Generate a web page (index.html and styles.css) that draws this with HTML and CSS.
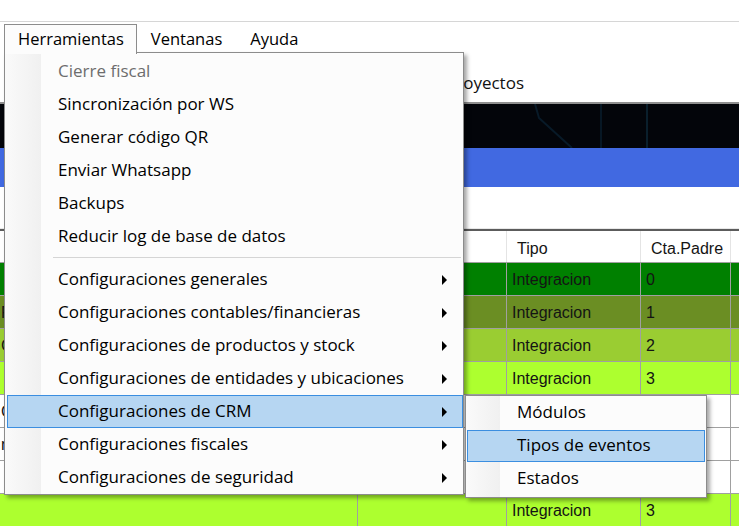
FILE: index.html
```html
<!DOCTYPE html>
<html lang="es">
<head>
    <meta charset="UTF-8">
    <title>Herramientas</title>
    <link rel="stylesheet" href="styles.css">
</head>
<body>
    <div class="titlebar"></div>

    <div class="menubar">
        <div class="menubar-item open">Herramientas</div>
        <div class="menubar-item">Ventanas</div>
        <div class="menubar-item">Ayuda</div>
    </div>

    <div class="toolbar">
        <span class="tool-link">Proyectos</span>
    </div>

    <div class="banner">
        <svg width="100%" height="44" viewBox="0 0 739 44" preserveAspectRatio="none">
            <polyline points="535,0 539,14 572,44" fill="none" stroke="#081a28" stroke-width="2"/>
            <line x1="601" y1="0" x2="601" y2="44" stroke="#071724" stroke-width="2"/>
            <line x1="647" y1="0" x2="647" y2="44" stroke="#0a1f2c" stroke-width="2"/>
        </svg>
    </div>
    <div class="band"></div>
    <div class="filter"></div>

    <div class="grid">
        <div class="grid-head">
            <div class="head-cell"></div>
            <div class="head-cell"></div>
            <div class="head-cell">Tipo</div>
            <div class="head-cell">Cta.Padre</div>
            <div class="head-cell"></div>
        </div>
        <div class="grid-row lvl0">
            <div class="cell"></div><div class="cell"></div><div class="cell">Integracion</div><div class="cell">0</div><div class="cell"></div>
        </div>
        <div class="grid-row lvl1">
            <div class="cell">Rdo</div><div class="cell"></div><div class="cell">Integracion</div><div class="cell">1</div><div class="cell"></div>
        </div>
        <div class="grid-row lvl2">
            <div class="cell">Caja</div><div class="cell"></div><div class="cell">Integracion</div><div class="cell">2</div><div class="cell"></div>
        </div>
        <div class="grid-row lvl3">
            <div class="cell"></div><div class="cell"></div><div class="cell">Integracion</div><div class="cell">3</div><div class="cell"></div>
        </div>
        <div class="grid-row">
            <div class="cell">Caja</div><div class="cell"></div><div class="cell"></div><div class="cell"></div><div class="cell"></div>
        </div>
        <div class="grid-row">
            <div class="cell">neto</div><div class="cell"></div><div class="cell"></div><div class="cell"></div><div class="cell"></div>
        </div>
        <div class="grid-row">
            <div class="cell"></div><div class="cell"></div><div class="cell"></div><div class="cell"></div><div class="cell"></div>
        </div>
        <div class="grid-row lvl3">
            <div class="cell"></div><div class="cell"></div><div class="cell">Integracion</div><div class="cell">3</div><div class="cell"></div>
        </div>
    </div>

    <div class="dropdown">
        <div class="menu-entry disabled">Cierre fiscal</div>
        <div class="menu-entry">Sincronización por WS</div>
        <div class="menu-entry">Generar código QR</div>
        <div class="menu-entry">Enviar Whatsapp</div>
        <div class="menu-entry">Backups</div>
        <div class="menu-entry">Reducir log de base de datos</div>
        <div class="menu-sep"></div>
        <div class="menu-entry">Configuraciones generales<span class="arrow"></span></div>
        <div class="menu-entry">Configuraciones contables/financieras<span class="arrow"></span></div>
        <div class="menu-entry">Configuraciones de productos y stock<span class="arrow"></span></div>
        <div class="menu-entry">Configuraciones de entidades y ubicaciones<span class="arrow"></span></div>
        <div class="menu-entry selected">Configuraciones de CRM<span class="arrow"></span></div>
        <div class="menu-entry">Configuraciones fiscales<span class="arrow"></span></div>
        <div class="menu-entry">Configuraciones de seguridad<span class="arrow"></span></div>
    </div>

    <div class="submenu">
        <div class="sub-entry">Módulos</div>
        <div class="sub-entry selected">Tipos de eventos</div>
        <div class="sub-entry">Estados</div>
    </div>
</body>
</html>
```

FILE: styles.css
```css
body {
    margin: 0;
    padding: 0;
    background: white;
    font-family: "Open Sans", "Noto Sans", sans-serif;
    font-size: 17px;
    color: #000;
    overflow: hidden;
}
.titlebar {
    height: 21px;
    border-bottom: 1px solid #d6d6d6;
}
.menubar {
    display: flex;
    align-items: flex-start;
    height: 30px;
    padding-left: 4px;
    font-size: 16.5px;
}
.menubar-item {
    margin-top: 2px;
    height: 29px;
    line-height: 27px;
    padding: 0 13px;
    border: 1px solid transparent;
    border-bottom: none;
    box-sizing: border-box;
}
.menubar-item.open {
    position: relative;
    z-index: 3;
    height: 30px;
    border-color: #8c8c8c;
    background: #fcfcfc;
    padding-right: 12px;
}
.toolbar {
    box-sizing: border-box;
    height: 52px;
    border-bottom: 2px solid #8f8f8f;
    padding-left: 446px;
    line-height: 62px;
}
.tool-link {
    color: #111;
}
.banner {
    height: 44px;
    background: #03050a;
}
.banner svg {
    display: block;
}
.band {
    height: 39px;
    background: #4169e1;
}
.filter {
    height: 36px;
    padding-bottom: 5px;
    border-bottom: 1px solid #e8e8e8;
}
.grid {
    border-top: 2px solid #5c5c5c;
    font-family: "Liberation Sans", Arial, sans-serif;
    font-size: 16px;
    color: #141414;
}
.grid-head, .grid-row {
    display: grid;
    grid-template-columns: 357px 148px 133px 89px 1fr;
    column-gap: 1px;
}
.grid-head {
    background: #e4e4e4;
    border-bottom: 1px solid #a0a0a0;
}
.head-cell {
    background: white;
    height: 31px;
    line-height: 36px;
    padding-left: 10px;
    white-space: nowrap;
}
.grid-row {
    background: #a0a0a0;
    border-bottom: 1px solid #a0a0a0;
}
.cell {
    background: white;
    height: 32px;
    line-height: 34px;
    padding-left: 5px;
    white-space: nowrap;
    overflow: hidden;
}
.grid-row .cell:first-child {
    padding-left: 1px;
}
.lvl0 .cell { background: #008000; }
.lvl1 .cell { background: #6b8e23; }
.lvl2 .cell { background: #9acd32; }
.lvl3 .cell { background: #adff2f; }

.dropdown {
    position: absolute;
    left: 4px;
    top: 52px;
    width: 458px;
    padding-top: 2px;
    border: 1px solid #8c8c8c;
    background: linear-gradient(to right, #fafafa 0, #f0f0f0 36px, #fcfcfc 36px);
    box-shadow: 3px 3px 4px rgba(0, 0, 0, 0.35);
    z-index: 2;
}
.menu-entry {
    display: flex;
    align-items: center;
    box-sizing: border-box;
    height: 33px;
    margin-left: 2px;
    padding: 0 15px 3px 50px;
    border: 1px solid transparent;
    white-space: nowrap;
}
.menu-entry.disabled {
    color: #6d6d6d;
}
.menu-entry.selected, .sub-entry.selected {
    background: #b6d6f2;
    border-color: #3b8ee0;
}
.arrow {
    margin: 3px 0 0 auto;
    width: 0;
    height: 0;
    border-left: 5px solid #000;
    border-top: 5px solid transparent;
    border-bottom: 5px solid transparent;
}
.menu-sep {
    height: 1px;
    margin: 4px 2px 5px 48px;
    background: #d5d5d5;
}
.submenu {
    position: absolute;
    left: 465px;
    top: 395px;
    width: 240px;
    padding: 1px 0 1px;
    border: 1px solid #8c8c8c;
    background: linear-gradient(to right, #fafafa 0, #f0f0f0 34px, #fcfcfc 34px);
    box-shadow: 3px 3px 4px rgba(0, 0, 0, 0.35);
    z-index: 4;
}
.sub-entry {
    box-sizing: border-box;
    height: 32px;
    line-height: 28px;
    margin: 0 1px 1px 1px;
    padding-left: 49px;
    border: 1px solid transparent;
}
```
